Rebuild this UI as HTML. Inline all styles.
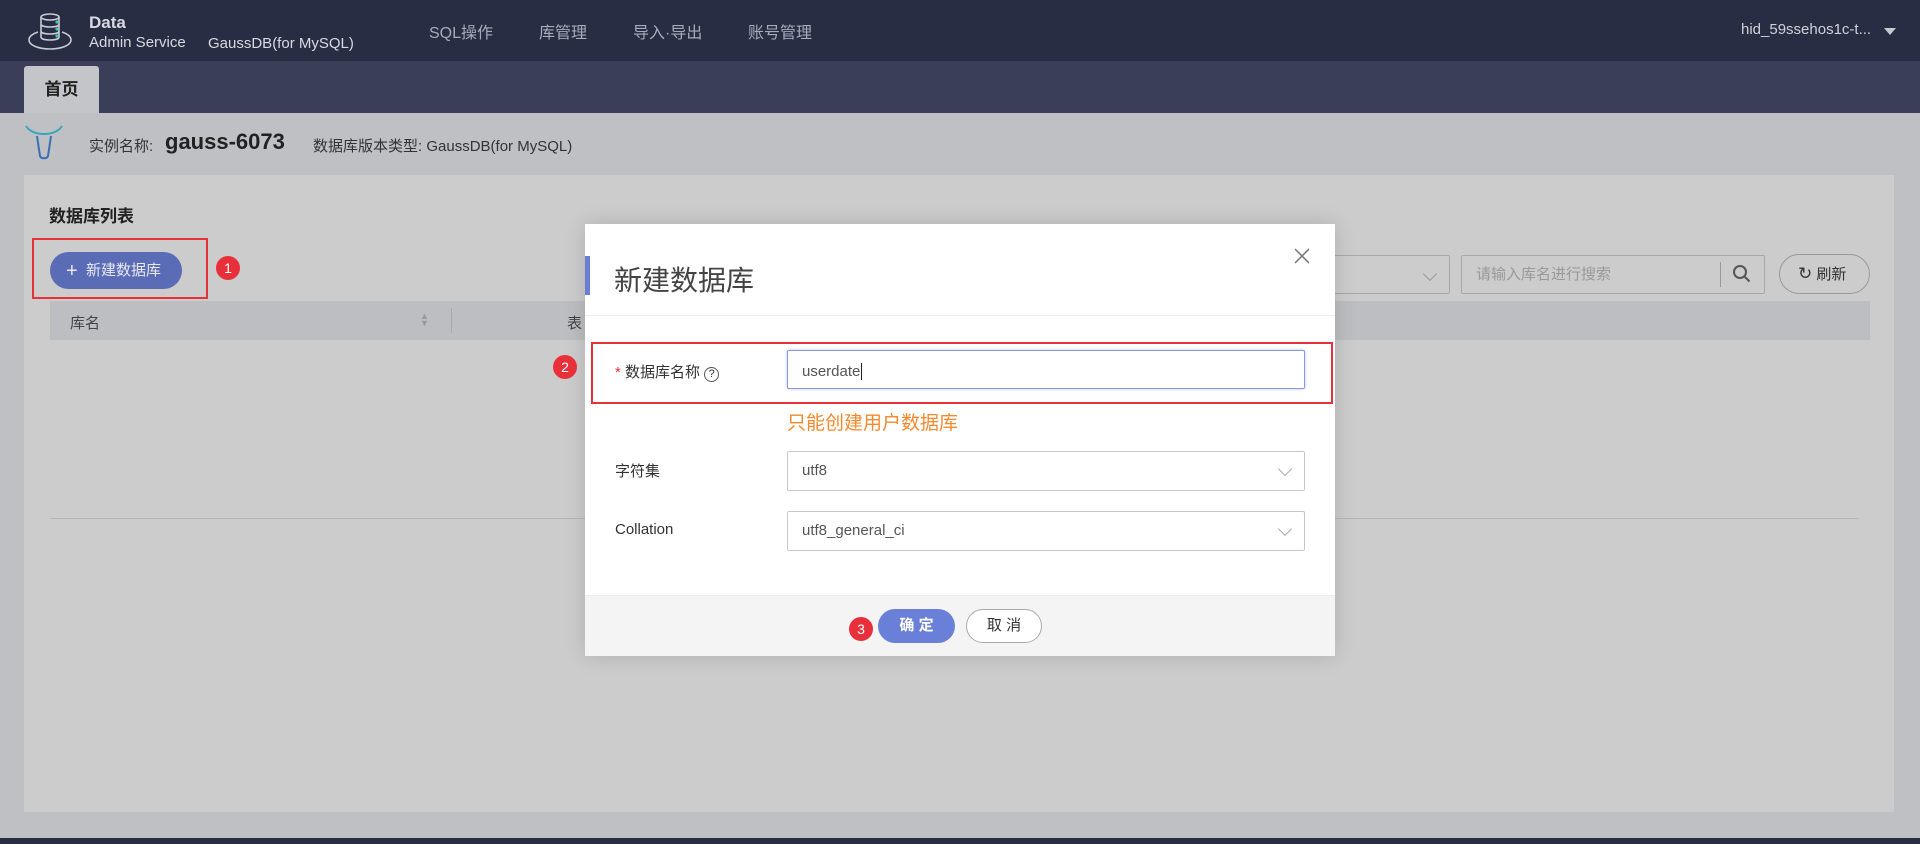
<!DOCTYPE html>
<html><head><meta charset="utf-8"><style>
*{margin:0;padding:0;box-sizing:border-box}
body{width:1920px;height:844px;overflow:hidden;background:#bfc0c3;font-family:"Liberation Sans","Noto Sans CJK SC",sans-serif;position:relative;color:#333}
.a{position:absolute}
.nav{left:0;top:0;width:1920px;height:61px;background:#282d44}
.tabs{left:0;top:61px;width:1920px;height:52px;background:#3a3e58}
.navi{color:#a9abb8;font-size:16px;top:19px}
.badge{width:24px;height:24px;border-radius:50%;background:#e8303a;color:#fff;font-size:14px;text-align:center;line-height:24px}
.sel{background:#fff;border:1px solid #c8c8c8;border-radius:2px;font-size:15px;color:#555;padding-left:14px;line-height:38px}
.chev{position:absolute;right:14px;top:13px;width:10px;height:10px;border-right:1px solid #aaa;border-bottom:1px solid #aaa;transform:rotate(45deg)}
</style></head><body>
<div class="a nav"></div>
<svg class="a" style="left:26px;top:12px" width="48" height="40" viewBox="0 0 48 40" fill="none" stroke="#c8cad4" stroke-width="1.6"><ellipse cx="24" cy="5" rx="9" ry="3"/><path d="M15 5v20c0 2 4 3 9 3s9-1 9-3V5M15 12c0 2 4 3 9 3s9-1 9-3M15 19c0 2 4 3 9 3s9-1 9-3"/><path d="M12 20c-6 2-9 5-9 8 0 5 9 9 21 9s21-4 21-9c0-3-3-6-9-8"/><circle cx="31" cy="10" r="1.6" fill="#3ec9a7" stroke="none"/><circle cx="31" cy="17" r="1.6" fill="#3ec9a7" stroke="none"/><circle cx="31" cy="24" r="1.6" fill="#3ec9a7" stroke="none"/></svg>
<div class="a" style="left:89px;top:13px;color:#d8d9e0;font-size:17px;font-weight:bold">Data</div>
<div class="a" style="left:89px;top:34px;color:#d8d9e0;font-size:15px">Admin Service</div>
<div class="a" style="left:208px;top:35px;color:#d8d9e0;font-size:15px">GaussDB(for MySQL)</div>
<div class="a navi" style="left:429px">SQL操作</div>
<div class="a navi" style="left:539px">库管理</div>
<div class="a navi" style="left:633px">导入·导出</div>
<div class="a navi" style="left:748px">账号管理</div>
<div class="a" style="left:1741px;top:21px;color:#d0d1d8;font-size:15px">hid_59ssehos1c-t...</div>
<div class="a" style="left:1884px;top:28px;border-left:6px solid transparent;border-right:6px solid transparent;border-top:7px solid #c8c9d0"></div>
<div class="a tabs"></div>
<div class="a" style="left:24px;top:66px;width:75px;height:47px;background:#c4c5c8;border-radius:3px 3px 0 0;font-weight:bold;font-size:17px;text-align:center;line-height:47px;color:#222">首页</div>
<svg class="a" style="left:24px;top:124px" width="40" height="36" viewBox="0 0 40 36" fill="none" stroke-width="2"><path d="M2 2c4 6 10 8 18 8s14-2 18-8" stroke="#3aa7b8"/><path d="M13 12l3 20c1 3 7 3 8 0l3-20" stroke="#3b6fb5"/></svg>
<div class="a" style="left:89px;top:135px;font-size:15px;color:#333">实例名称:</div>
<div class="a" style="left:165px;top:129px;font-size:22px;font-weight:bold;color:#222">gauss-6073</div>
<div class="a" style="left:313px;top:135px;font-size:15px;color:#333">数据库版本类型: GaussDB(for MySQL)</div>
<div class="a" style="left:24px;top:175px;width:1870px;height:637px;background:#cccccc"></div>
<div class="a" style="left:49px;top:202px;font-size:17px;font-weight:bold;color:#222">数据库列表</div>
<div class="a" style="left:32px;top:238px;width:176px;height:61px;border:2px solid #e8303a"></div>
<div class="a" style="left:50px;top:252px;width:132px;height:37px;background:#5b6cb6;border-radius:19px;color:#e8e9f2;font-size:15px;line-height:37px;padding-left:16px"><span style="font-size:20px;vertical-align:-2px">+</span>&nbsp; 新建数据库</div>
<div class="a badge" style="left:216px;top:256px">1</div>
<div class="a" style="left:50px;top:301px;width:1820px;height:39px;background:#bdbec1"></div>
<div class="a" style="left:70px;top:312px;font-size:15px;color:#444">库名</div>
<div class="a" style="left:420px;top:313px;color:#999;font-size:9px;line-height:7px">▲<br>▼</div>
<div class="a" style="left:451px;top:308px;width:1px;height:25px;background:#aaa"></div>
<div class="a" style="left:567px;top:312px;font-size:15px;color:#444">表</div>
<div class="a" style="left:50px;top:518px;width:1808px;height:1px;background:#b5b5b5"></div>
<div class="a" style="left:1330px;top:255px;width:120px;height:39px;border:1px solid #a8a8a8;border-radius:2px"><div class="chev" style="border-color:#999"></div></div>
<div class="a" style="left:1461px;top:255px;width:304px;height:39px;border:1px solid #a8a8a8;border-radius:2px;color:#999;font-size:15px;line-height:37px;padding-left:14px">请输入库名进行搜索</div>
<div class="a" style="left:1720px;top:262px;width:1px;height:25px;background:#999"></div>
<svg class="a" style="left:1732px;top:264px" width="20" height="20" fill="none" stroke="#555" stroke-width="2"><circle cx="8" cy="8" r="6"/><path d="M12.5 12.5l5 5"/></svg>
<div class="a" style="left:1779px;top:254px;width:91px;height:40px;border:1px solid #999;border-radius:20px;font-size:15px;line-height:38px;padding-left:18px;color:#333"><span style="font-size:17px">↻</span> 刷新</div>
<div class="a" style="left:585px;top:224px;width:750px;height:432px;background:#fff;box-shadow:0 0 20px rgba(0,0,0,.15)"></div>
<div class="a" style="left:585px;top:256px;width:5px;height:39px;background:#6a7ed8"></div>
<div class="a" style="left:614px;top:259px;font-size:28px;color:#444">新建数据库</div>
<svg class="a" style="left:1294px;top:248px" width="16" height="16" stroke="#777" stroke-width="1.5"><path d="M1 1l14 14M15 1L1 15"/></svg>
<div class="a" style="left:585px;top:315px;width:750px;height:1px;background:#eee"></div>
<div class="a" style="left:591px;top:342px;width:742px;height:62px;border:2px solid #e8303a"></div>
<div class="a badge" style="left:553px;top:355px">2</div>
<div class="a" style="left:615px;top:361px;font-size:15px;color:#333"><span style="color:#e8303a">*</span> 数据库名称 <span style="display:inline-block;width:15px;height:15px;border:1px solid #555;border-radius:50%;font-size:11px;text-align:center;line-height:13px">?</span></div>
<div class="a sel" style="left:787px;top:350px;width:518px;height:39px;border-color:#8a9ad8;box-shadow:0 0 3px #b8c2ee;color:#555;line-height:41px">userdate<span style="border-left:1px solid #222;margin-left:1px"></span></div>
<div class="a" style="left:787px;top:408px;font-size:19px;color:#f5892e">只能创建用户数据库</div>
<div class="a" style="left:615px;top:460px;font-size:15px;color:#333">字符集</div>
<div class="a sel" style="left:787px;top:451px;width:518px;height:40px">utf8<div class="chev" style="top:12px"></div></div>
<div class="a" style="left:615px;top:521px;font-size:15px;color:#333">Collation</div>
<div class="a sel" style="left:787px;top:511px;width:518px;height:40px">utf8_general_ci<div class="chev" style="top:12px"></div></div>
<div class="a" style="left:585px;top:595px;width:750px;height:61px;background:#f4f4f4;border-top:1px solid #eee"></div>
<div class="a badge" style="left:849px;top:617px">3</div>
<div class="a" style="left:878px;top:609px;width:77px;height:34px;background:#6a80d8;border-radius:17px;color:#fff;font-size:15px;text-align:center;line-height:34px;font-weight:bold">确 定</div>
<div class="a" style="left:966px;top:609px;width:76px;height:34px;background:#fff;border:1px solid #aaa;border-radius:17px;color:#333;font-size:15px;text-align:center;line-height:32px">取 消</div>
<div class="a" style="left:0;top:838px;width:1920px;height:6px;background:#282d44"></div>
</body></html>
